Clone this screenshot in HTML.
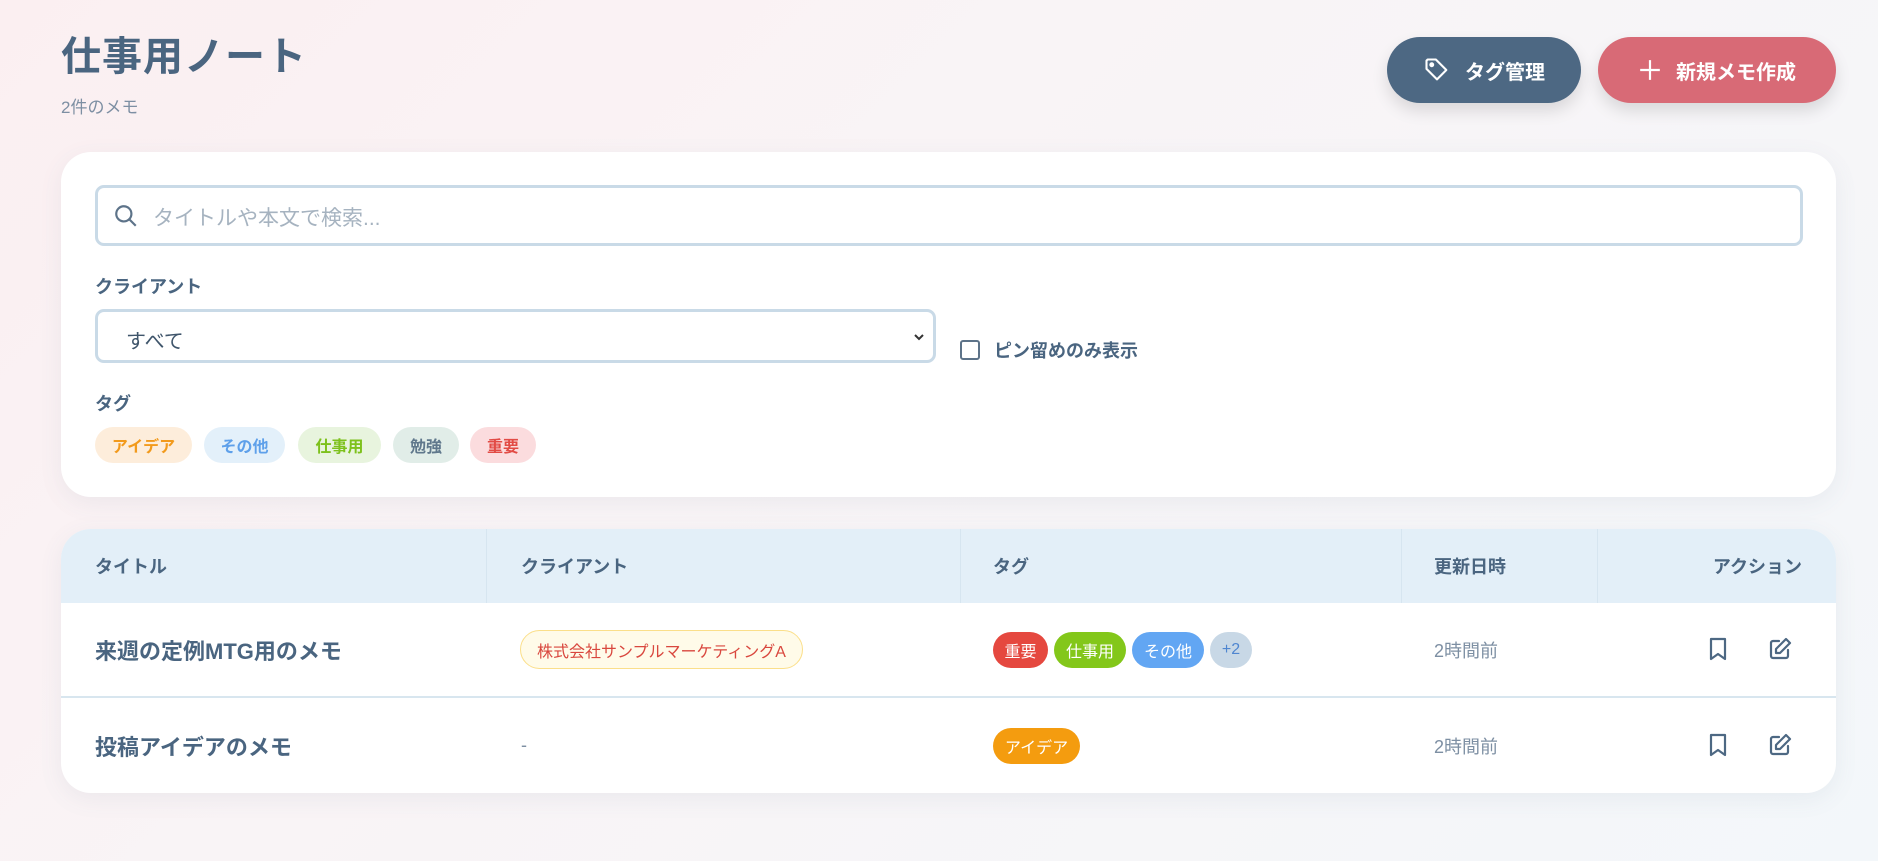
<!DOCTYPE html>
<html><head><meta charset="utf-8"><style>
*{box-sizing:border-box;margin:0;padding:0}
body{width:1878px;height:861px;overflow:hidden;font-family:"Liberation Sans","Noto Sans CJK JP",sans-serif;background:linear-gradient(135deg,#fbeff1 0%,#f9f4f6 40%,#f3f7fa 100%);position:relative;color:#4a6580}
.abs{position:absolute}
h1{position:absolute;left:61px;top:24px;font-size:40px;font-weight:700;color:#4a6580;letter-spacing:1px}
.sub{left:61px;top:93px;font-size:17px;color:#7d8fa3}
.btn{position:absolute;top:37px;height:66px;border-radius:33px;color:#fff;font-size:20px;font-weight:700;display:flex;align-items:center;justify-content:center;gap:14px;box-shadow:0 8px 16px rgba(0,0,0,.12)}
.card{position:absolute;left:61px;width:1775px;background:#fff;border-radius:30px;box-shadow:0 6px 24px rgba(80,100,130,.08)}
.input{position:absolute;border:3px solid #c9dae7;border-radius:9px;background:#fff}
.lbl{position:absolute;font-size:18px;font-weight:700;color:#4a6580}
.chip{position:absolute;top:427px;height:36px;border-radius:18px;font-size:16px;font-weight:700;display:flex;align-items:center;justify-content:center}
.th{position:absolute;top:0;height:74px;display:flex;align-items:center;font-size:18px;font-weight:700;color:#4a6580}
.td{position:absolute;display:flex;align-items:center;font-size:18px}
.tg{position:absolute;height:36px;border-radius:18px;color:#fff;font-size:16px;display:flex;align-items:center;justify-content:center}
</style></head><body>
<h1>仕事用ノート</h1>
<div class="abs sub">2件のメモ</div>
<div class="btn" style="left:1387px;width:194px;background:#4d6883">
<svg width="28" height="28" viewBox="0 0 24 24" fill="none" stroke="#fff" stroke-width="1.8" stroke-linejoin="round"><path d="M3 4v7l9 9 8-8-9-9H4z"/><circle cx="7.5" cy="7.5" r="1.2" fill="#fff"/></svg>タグ管理</div>
<div class="btn" style="left:1598px;width:238px;background:#d86a76">
<svg width="24" height="24" viewBox="0 0 22 22" stroke="#fff" stroke-width="2"><path d="M11 2v18M2 11h18"/></svg>新規メモ作成</div>

<div class="card" style="top:152px;height:345px"></div>
<div class="input" style="left:95px;top:185px;width:1708px;height:61px">
<svg class="abs" style="left:15px;top:15px" width="26" height="26" viewBox="0 0 24 24" fill="none" stroke="#5d7389" stroke-width="2"><circle cx="10" cy="10" r="7"/><path d="M15 15l6 6"/></svg>
<span class="abs" style="left:55px;top:14px;font-size:21px;color:#a6b3c0">タイトルや本文で検索...</span></div>
<div class="lbl" style="left:95px;top:273px">クライアント</div>
<div class="input" style="left:95px;top:309px;width:841px;height:54px">
<span class="abs" style="left:28px;top:13px;font-size:20px;color:#3f556b">すべて</span>
<svg class="abs" style="right:8px;top:20px" width="12" height="10" viewBox="0 0 12 10" fill="none" stroke="#333" stroke-width="2"><path d="M2 3l4 4 4-4"/></svg></div>
<div class="abs" style="left:960px;top:340px;width:20px;height:20px;border:2px solid #5d7389;border-radius:3px"></div>
<div class="lbl" style="left:994px;top:337px">ピン留めのみ表示</div>
<div class="lbl" style="left:95px;top:390px">タグ</div>
<div class="chip" style="left:95px;width:97px;background:#fdeddb;color:#f29a1c">アイデア</div>
<div class="chip" style="left:204px;width:81px;background:#e3f0fa;color:#5ea0ea">その他</div>
<div class="chip" style="left:298px;width:83px;background:#e8f4de;color:#7dc11c">仕事用</div>
<div class="chip" style="left:393px;width:66px;background:#e1ede8;color:#60788c">勉強</div>
<div class="chip" style="left:470px;width:66px;background:#fbdcde;color:#e24b45">重要</div>

<div class="card" style="top:529px;height:264px;overflow:hidden">
<div class="abs" style="left:0;top:0;width:100%;height:74px;background:#e3eff8"></div>
<div class="abs" style="left:425px;top:0;width:1px;height:74px;background:#d6e5f0"></div>
<div class="abs" style="left:899px;top:0;width:1px;height:74px;background:#d6e5f0"></div>
<div class="abs" style="left:1340px;top:0;width:1px;height:74px;background:#d6e5f0"></div>
<div class="abs" style="left:1536px;top:0;width:1px;height:74px;background:#d6e5f0"></div>
<div class="th" style="left:34px">タイトル</div>
<div class="th" style="left:460px">クライアント</div>
<div class="th" style="left:932px">タグ</div>
<div class="th" style="left:1373px">更新日時</div>
<div class="th" style="right:34px">アクション</div>
<div class="abs" style="left:0;top:167px;width:100%;height:2px;background:#d8e6ef"></div>
<div class="td" style="left:34px;top:74px;height:94px;font-size:22px;font-weight:700">来週の定例MTG用のメモ</div>
<div class="abs" style="left:459px;top:101px;width:283px;height:39px;border:1px solid #fbdf8a;background:#fffbe9;border-radius:20px;color:#d9473e;font-size:16px;display:flex;align-items:center;justify-content:center">株式会社サンプルマーケティングA</div>
<div class="tg" style="left:932px;top:103px;width:55px;background:#e5483f">重要</div>
<div class="tg" style="left:993px;top:103px;width:72px;background:#83c71a">仕事用</div>
<div class="tg" style="left:1071px;top:103px;width:72px;background:#62a6f3">その他</div>
<div class="tg" style="left:1149px;top:103px;width:42px;background:#c8d8e6;color:#4f86d0">+2</div>
<div class="td" style="left:1373px;top:74px;height:94px;color:#7d8fa3">2時間前</div>
<div class="td" style="left:34px;top:169px;height:95px;font-size:22px;font-weight:700">投稿アイデアのメモ</div>
<div class="td" style="left:460px;top:169px;height:95px;color:#7d8fa3">-</div>
<div class="tg" style="left:932px;top:199px;width:87px;background:#f49c0f">アイデア</div>
<div class="td" style="left:1373px;top:169px;height:95px;color:#7d8fa3">2時間前</div>
<svg class="abs" style="left:1645px;top:107px" width="24" height="26" viewBox="0 0 24 26" fill="none" stroke="#4d6883" stroke-width="2.2" stroke-linejoin="round"><path d="M5 3h14v20l-7-5-7 5z"/></svg>
<svg class="abs" style="left:1706px;top:107px" width="26" height="26" viewBox="0 0 26 26" fill="none" stroke="#4d6883" stroke-width="2.2" stroke-linejoin="round" stroke-linecap="round"><path d="M12 5H6a2 2 0 0 0-2 2v13a2 2 0 0 0 2 2h13a2 2 0 0 0 2-2v-6"/><path d="M19 3l4 4-10 10H9v-4z"/></svg>
<svg class="abs" style="left:1645px;top:203px" width="24" height="26" viewBox="0 0 24 26" fill="none" stroke="#4d6883" stroke-width="2.2" stroke-linejoin="round"><path d="M5 3h14v20l-7-5-7 5z"/></svg>
<svg class="abs" style="left:1706px;top:203px" width="26" height="26" viewBox="0 0 26 26" fill="none" stroke="#4d6883" stroke-width="2.2" stroke-linejoin="round" stroke-linecap="round"><path d="M12 5H6a2 2 0 0 0-2 2v13a2 2 0 0 0 2 2h13a2 2 0 0 0 2-2v-6"/><path d="M19 3l4 4-10 10H9v-4z"/></svg>
</div>
</body></html>
